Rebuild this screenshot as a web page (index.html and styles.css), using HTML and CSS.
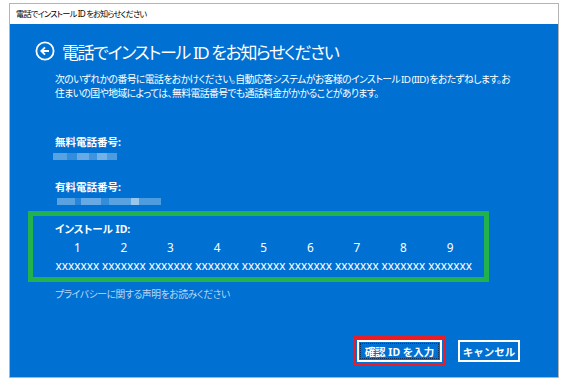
FILE: index.html
```html
<!DOCTYPE html>
<html lang="ja">
<head>
  <meta charset="UTF-8" />
  <title>電話でインストール ID をお知らせください</title>
  <link rel="stylesheet" href="styles.css">
</head>
<body>
  <div class="window">
    <div class="titlebar">電話でインストール ID をお知らせください</div>
    <div class="content">
      <div class="heading">
        <svg class="back" width="20" height="20" viewBox="0 0 20 20">
          <circle cx="10" cy="10" r="8.6" fill="none" stroke="#fff" stroke-width="1.8"/>
          <path d="M14 10H6.5M10 6.3L6.3 10L10 13.7" fill="none" stroke="#fff" stroke-width="1.8"/>
        </svg>
        <h1>電話でインストール ID をお知らせください</h1>
      </div>
      <p class="intro">次のいずれかの番号に電話をおかけください。自動応答システムがお客様のインストール ID (IID) をおたずねします。お<br>住まいの国や地域によっては、無料電話番号でも通話料金がかかることがあります。</p>
      <div class="field">
        <div class="label">無料電話番号:</div>
        <div class="blur">
          <span style="width:14px;opacity:.35"></span><span style="width:10px;opacity:.2"></span><span style="width:12px;opacity:.4"></span><span style="width:8px;opacity:.25"></span><span style="width:10px;opacity:.45"></span><span style="width:10px;opacity:.3"></span>
        </div>
      </div>
      <div class="field">
        <div class="label">有料電話番号:</div>
        <div class="blur wide">
          <span style="width:18px;opacity:.35"></span><span style="width:6px;opacity:.15"></span><span style="width:20px;opacity:.4"></span><span style="width:8px;opacity:.2"></span><span style="width:22px;opacity:.35"></span><span style="width:8px;opacity:.6"></span><span style="width:22px;opacity:.3"></span>
        </div>
      </div>
      <div class="idbox">
        <div class="label">インストール ID:</div>
        <div class="idgrid">
          <span>1</span><span>2</span><span>3</span><span>4</span><span>5</span><span>6</span><span>7</span><span>8</span><span>9</span>
          <span>xxxxxxx</span><span>xxxxxxx</span><span>xxxxxxx</span><span>xxxxxxx</span><span>xxxxxxx</span><span>xxxxxxx</span><span>xxxxxxx</span><span>xxxxxxx</span><span>xxxxxxx</span>
        </div>
      </div>
      <a class="privacy" href="#">プライバシーに関する声明をお読みください</a>
      <div class="buttons">
        <button class="btn focused">確認 ID を入力</button>
        <button class="btn">キャンセル</button>
      </div>
    </div>
  </div>
</body>
</html>
```

FILE: styles.css
```css
body { margin: 0; background: #fff; font-family: "Noto Sans", "Noto Sans CJK JP", sans-serif; font-feature-settings: "palt"; }
.window { margin: 3px 0 0 9px; width: 548px; height: 373px; border: 1px solid #b4b4b4; display: flex; flex-direction: column; }
.titlebar { height: 20px; line-height: 20px; padding-left: 6px; font-size: 8.2px; color: #000; background: #fff; letter-spacing: -0.8px; }
.content { flex: 1; background: #0071d3; color: #fff; padding: 14px 38px 0 18px; display: flex; flex-direction: column; }
.heading { display: flex; align-items: center; gap: 7px; padding-left: 7px; height: 26px; }
.back { flex: none; }
h1 { margin: 0; font-size: 17px; font-weight: 400; letter-spacing: -1.4px; white-space: nowrap; }
.intro { margin: 9px 0 0 27px; font-size: 9.8px; line-height: 14px; letter-spacing: -0.55px; word-spacing: -1px; white-space: nowrap; }
.field { margin: 34px 0 0 27px; }
.field + .field { margin-top: 20px; }
.label { font-size: 10.5px; font-weight: 700; line-height: 14px; }
.blur { display: flex; height: 7px; margin-top: 4px; margin-left: -2px; }
.blur span { display: block; height: 7px; background: #fff; }
.blur.wide { margin-left: 2px; }
.idbox { margin-top: 6px; width: 429px; border: 5px solid #22b14c; padding: 6px 0 4px 22px; }
.idgrid { display: grid; grid-template-columns: repeat(9, 46.6px); margin-left: -1px; margin-top: 3px; row-gap: 2px; font-size: 11.8px; line-height: 16px; text-align: center; }
.privacy { margin: 5px 0 0 27px; font-size: 9.8px; color: #bcd6f2; text-decoration: none; line-height: 15px; letter-spacing: -0.4px; }
.buttons { margin-top: auto; margin-bottom: 15px; display: flex; justify-content: flex-end; gap: 16px; }
.btn { position: relative; height: 22px; padding: 0; background: #0071d3; border: 2px solid #fff; color: #fff; font-family: inherit; font-size: 10.5px; font-weight: 700; white-space: nowrap; }
.btn.focused { width: 85px; outline: 3px solid #ec1c24; outline-offset: 1px; }
.btn.focused::after { content: ""; position: absolute; inset: 1px; border: 1px dotted #0b2f5c; }
.btn:last-child { width: 62px; }
```
